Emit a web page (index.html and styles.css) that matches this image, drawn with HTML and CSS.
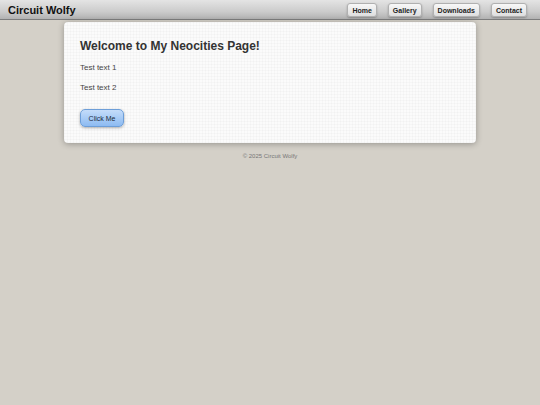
FILE: index.html
```html
<!DOCTYPE html>
<html lang="en">
<head>
  <meta charset="UTF-8">
  <meta name="viewport" content="width=device-width, initial-scale=1.0">
  <title>Circuit Wolfy</title>
  <link rel="stylesheet" href="styles.css">
</head>
<body>
  <header class="topbar">
    <h1 class="site-title">Circuit Wolfy</h1>
    <nav class="nav">
      <a href="#" class="nav-btn">Home</a>
      <a href="#" class="nav-btn">Gallery</a>
      <a href="#" class="nav-btn">Downloads</a>
      <a href="#" class="nav-btn">Contact</a>
    </nav>
  </header>

  <main class="card">
    <h2>Welcome to My Neocities Page!</h2>
    <p>Test text 1</p>
    <p>Test text 2</p>
    <button class="click-btn">Click Me</button>
  </main>

  <footer class="footer">&copy; 2025 Circuit Wolfy</footer>
</body>
</html>
```

FILE: styles.css
```css
* {
  margin: 0;
  padding: 0;
  box-sizing: border-box;
}

body {
  font-family: 'Liberation Sans', Arial, sans-serif;
  background-color: #d4d0c8;
  color: #333;
}

/* Top bar */
.topbar {
  height: 20px;
  display: flex;
  justify-content: space-between;
  align-items: center;
  padding: 0 13px 0 8px;
  background: linear-gradient(to bottom, #e4e4e4, #cccccc 60%, #b2b2b2);
  border-bottom: 1px solid #7d7d7d;
}

.site-title {
  font-size: 11px;
  font-weight: bold;
  color: #111;
}

.nav {
  display: flex;
  gap: 11px;
}

.nav-btn {
  display: block;
  height: 14px;
  line-height: 14px;
  padding: 0 4px;
  font-size: 7px;
  font-weight: bold;
  color: #222;
  text-decoration: none;
  background: linear-gradient(to bottom, #f8f8f8, #dedede);
  border: 1px solid #b0b0b0;
  border-radius: 3px;
  box-shadow: 0 1px 2px rgba(0, 0, 0, 0.25);
}

/* Content card */
.card {
  width: 412px;
  margin: 2px auto 0;
  padding: 17px 16px 16px;
  border-radius: 4px;
  background-color: #fbfbfb;
  background-image:
    repeating-linear-gradient(to right, rgba(0, 0, 0, 0.02) 0 1px, transparent 1px 3px),
    repeating-linear-gradient(to bottom, rgba(0, 0, 0, 0.02) 0 1px, transparent 1px 3px);
  box-shadow: 0 1px 6px rgba(0, 0, 0, 0.3);
}

.card h2 {
  font-size: 12px;
  font-weight: bold;
  color: #333;
  margin-bottom: 10px;
}

.card p {
  font-size: 8px;
  color: #444;
  margin-bottom: 11px;
}

.click-btn {
  margin-top: 6px;
  width: 44px;
  height: 18px;
  font-family: inherit;
  font-size: 7px;
  color: #1c2a3a;
  background: linear-gradient(to bottom, #c4dcfa, #8dbbf2);
  border: 1px solid #6d9ed8;
  border-radius: 5px;
  box-shadow: 0 1px 3px rgba(0, 0, 0, 0.3);
  cursor: pointer;
}

.footer {
  text-align: center;
  font-size: 6px;
  color: #777;
  margin-top: 10px;
}
```
